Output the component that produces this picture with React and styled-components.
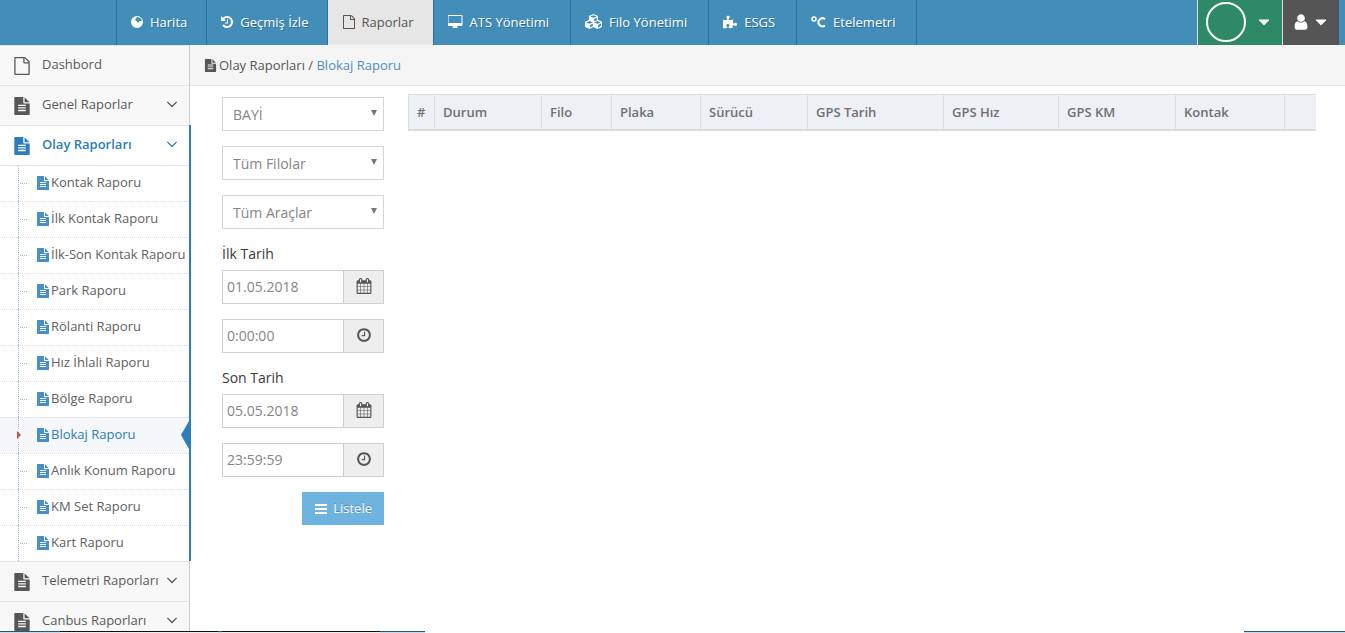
import React, { useState } from 'react';
import styled, { createGlobalStyle, css } from 'styled-components';
import { FaCubes, FaPuzzlePiece } from 'react-icons/fa';

const GlobalStyle = createGlobalStyle`
  *, *::before, *::after {
    box-sizing: border-box;
  }
  body {
    margin: 0;
    background: #fff;
    color: #393939;
    font-family: 'Open Sans', 'Noto Sans', sans-serif;
    font-size: 13px;
    line-height: 20px;
  }
  a {
    color: inherit;
    text-decoration: none;
  }
  ul {
    list-style: none;
    margin: 0;
    padding: 0;
  }
`;

const paths = {
  file: 'M1596 380q28 28 48 76t20 88v1152q0 40-28 68t-68 28h-1344q-40 0-68-28t-28-68v-1600q0-40 28-68t68-28h896q40 0 88 20t76 48zm-444-244v376h376q-10-29-22-41l-313-313q-12-12-41-22zm384 1528v-1024h-416q-40 0-68-28t-28-68v-416h-768v1536h1280z',
  fileText: 'M1596 476q14 14 28 36h-472v-472q22 14 36 28zm-476 164h544v1056q0 40-28 68t-68 28h-1344q-40 0-68-28t-28-68v-1600q0-40 28-68t68-28h800v544q0 40 28 68t68 28zm160 736v-64q0-14-9-23t-23-9h-704q-14 0-23 9t-9 23v64q0 14 9 23t23 9h704q14 0 23-9t9-23zm0-256v-64q0-14-9-23t-23-9h-704q-14 0-23 9t-9 23v64q0 14 9 23t23 9h704q14 0 23-9t9-23zm0-256v-64q0-14-9-23t-23-9h-704q-14 0-23 9t-9 23v64q0 14 9 23t23 9h704q14 0 23-9t9-23z',
  clock: 'M1024 544v448q0 14-9 23t-23 9h-320q-14 0-23-9t-9-23v-64q0-14 9-23t23-9h224v-352q0-14 9-23t23-9h64q14 0 23 9t9 23zm416 352q0-148-73-273t-198-198-273-73-273 73-198 198-73 273 73 273 198 198 273 73 273-73 198-198 73-273zm224 0q0 209-103 385.5t-279.5 279.5-385.5 103-385.5-103-279.5-279.5-103-385.5 103-385.5 279.5-279.5 385.5-103 385.5 103 279.5 279.5 103 385.5z',
  calendar: 'M192 1664h288v-288h-288v288zm352 0h320v-288h-320v288zm-352-352h288v-320h-288v320zm352 0h320v-320h-320v320zm-352-384h288v-288h-288v288zm736 736h320v-288h-320v288zm-384-736h320v-288h-320v288zm768 736h288v-288h-288v288zm-384-352h320v-320h-320v320zm-352-864v-288q0-13-9.5-22.5t-22.5-9.5h-64q-13 0-22.5 9.5t-9.5 22.5v288q0 13 9.5 22.5t22.5 9.5h64q13 0 22.5-9.5t9.5-22.5zm736 864h288v-320h-288v320zm-384-384h320v-288h-320v288zm384 0h288v-288h-288v288zm32-480v-288q0-13-9.5-22.5t-22.5-9.5h-64q-13 0-22.5 9.5t-9.5 22.5v288q0 13 9.5 22.5t22.5 9.5h64q13 0 22.5-9.5t9.5-22.5zm384-64v1280q0 52-38 90t-90 38h-1408q-52 0-90-38t-38-90v-1280q0-52 38-90t90-38h128v-96q0-66 47-113t113-47h64q66 0 113 47t47 113v96h384v-96q0-66 47-113t113-47h64q66 0 113 47t47 113v96h128q52 0 90 38t38 90z',
  angleDown: 'M1395 736q0 13-10 23l-466 466q-10 10-23 10t-23-10l-466-466q-10-10-10-23t10-23l50-50q10-10 23-10t23 10l393 393 393-393q10-10 23-10t23 10l50 50q10 10 10 23z',
  caretDown: 'M1408 704q0 26-19 45l-448 448q-19 19-45 19t-45-19l-448-448q-19-19-19-45t19-45 45-19h896q26 0 45 19t19 45z',
  user: 'M1536 1399q0 109-62.5 187t-150.5 78h-854q-88 0-150.5-78t-62.5-187q0-85 8.5-160.5t31.5-152 58.5-131 94-89 134.5-34.5q131 128 313 128t313-128q76 0 134.5 34.5t94 89 58.5 131 31.5 152 8.5 160.5zm-256-887q0 159-112.5 271.5t-271.5 112.5-271.5-112.5-112.5-271.5 112.5-271.5 271.5-112.5 271.5 112.5 112.5 271.5z',
  history: 'M1664 896q0 156-61 298t-164 245-245 164-298 61q-172 0-327-72.5t-264-204.5q-7-10-6.5-22.5t8.5-20.5l137-138q10-9 25-9 16 2 23 12 73 95 179 147t225 52q104 0 198.5-40.5t163.5-109.5 109.5-163.5 40.5-198.5-40.5-198.5-109.5-163.5-163.5-109.5-198.5-40.5q-98 0-188 35.5t-160 101.5l137 138q31 30 14 69-17 40-59 40h-448q-26 0-45-19t-19-45v-448q0-42 40-59 39-17 69 14l130 129q107-101 244.5-156.5t284.5-55.5q156 0 298 61t245 164 164 245 61 298zm-640-288v448q0 14-9 23t-23 9h-320q-14 0-23-9t-9-23v-64q0-14 9-23t23-9h224v-352q0-14 9-23t23-9h64q14 0 23 9t9 23z',
  desktop: 'M1728 992v-832q0-13-9.5-22.5t-22.5-9.5h-1600q-13 0-22.5 9.5t-9.5 22.5v832q0 13 9.5 22.5t22.5 9.5h1600q13 0 22.5-9.5t9.5-22.5zm128-832v1088q0 66-47 113t-113 47h-544q0 37 16 77.5t32 71 16 43.5q0 26-19 45t-45 19h-512q-26 0-45-19t-19-45q0-14 16-44t32-70 16-78h-544q-66 0-113-47t-47-113v-1088q0-66 47-113t113-47h1600q66 0 113 47t47 113z',
  bars: 'M128 256h1536v256h-1536zM128 768h1536v256h-1536zM128 1280h1536v256h-1536z',
  globe: 'M896 128a768 768 0 1 0 0 1536a768 768 0 1 0 0-1536zM800 330l200-60 130 60 200 40 130 200 60 200-120 40-110-70-120 60-60 140-90 60-110-110-100-130-120-60-30-150 130-100z',
};

// glyphs that do not fill the square em box
const boxes = {
  globe: [128, 1536],
  history: [128, 1536],
  desktop: [0, 1920],
};

const Svg = styled.svg`
  display: block;
  flex: none;
  fill: currentColor;
`;

const Icon = ({ name, size = 14 }) => {
  const [x, w] = boxes[name] || [0, 1792];
  return (
    <Svg
      width={Math.round((size * w) / 1792)}
      height={size}
      viewBox={`${x} 0 ${w} 1792`}
      fillRule="evenodd"
      aria-hidden="true"
    >
      <path d={paths[name]} />
    </Svg>
  );
};

const Celsius = () => (
  <Svg width="15" height="14" viewBox="0 0 15 14" aria-hidden="true">
    <circle cx="3" cy="4" r="2" fill="none" stroke="currentColor" strokeWidth="1.5" />
    <path d="M14 4.2A4 4 0 1 0 14 10.4" fill="none" stroke="currentColor" strokeWidth="2" />
  </Svg>
);

const Page = styled.div`
  display: flex;
  flex-direction: column;
  height: 100vh;
  overflow: hidden;
`;

const Navbar = styled.header`
  display: flex;
  flex: none;
  justify-content: space-between;
  height: 45px;
  padding: 0 6px 0 116px;
  background: #438eb9;
`;

const NavList = styled.ul`
  display: flex;
  border-right: 1px solid #2c7199;
`;

const NavLink = styled.a`
  display: flex;
  align-items: center;
  gap: 7px;
  height: 45px;
  padding: 0 ${({ $wide }) => ($wide ? '21px' : '19px')} 2px 14px;
  border-left: 1px solid #2c7199;
  color: #fff;
  text-shadow: 1px 1px 0 rgba(0, 0, 0, 0.25);
  ${({ $active }) =>
    $active &&
    css`
      gap: 5px;
      background: #e6e6e6;
      color: #555;
      text-shadow: none;
    `}
`;

const UserNav = styled.div`
  display: flex;
`;

const UserButton = styled.button`
  display: flex;
  align-items: center;
  gap: ${({ $green }) => ($green ? '9px' : '2px')};
  height: 45px;
  padding: ${({ $green }) => ($green ? '0 9px 2px 8px' : '0 9px 2px')};
  border: 0;
  border-left: 1px solid #ddd;
  background: ${({ $green }) => ($green ? '#2e8965' : '#555')};
  color: #fff;
`;

const Avatar = styled.span`
  width: 40px;
  height: 40px;
  border: 2px solid #fff;
  border-radius: 50%;
`;

const Body = styled.div`
  display: flex;
  flex: 1;
  min-height: 0;
`;

const Sidebar = styled.nav`
  flex: none;
  width: 190px;
  border-right: 1px solid #ccc;
  background: #f2f2f2;
`;

const MenuItem = styled.li`
  position: relative;
  border-top: 1px solid #e5e5e5;
  ${({ $open }) =>
    $open &&
    css`
      background: #fff;
      &::after {
        content: '';
        position: absolute;
        top: -1px;
        bottom: 0;
        right: -2px;
        width: 2px;
        background: #2b7dbc;
      }
    `}
`;

const MenuLink = styled.a`
  display: flex;
  align-items: center;
  height: 39px;
  padding: 0 8px 0 13px;
  background: ${({ $open }) => ($open ? '#fff' : '#f8f8f8')};
  color: ${({ $open }) => ($open ? '#2b7dbc' : '#585858')};
  font-weight: ${({ $open }) => ($open ? 600 : 400)};
`;

const MenuLabel = styled.span`
  display: flex;
  flex: 1;
  align-items: center;
  justify-content: space-between;
  padding: 0 0 4px 11px;
  white-space: nowrap;
`;

const SubMenu = styled.ul`
  border-top: 1px solid #e5e5e5;
`;

const SubLink = styled.a`
  display: flex;
  align-items: center;
  gap: 1px;
  height: 35px;
  padding: 0 0 2px 36px;
  background: ${({ $active }) => ($active ? '#f5f7fa' : '#fff')};
  color: ${({ $active }) => ($active ? '#2b7dbc' : '#616161')};
  white-space: nowrap;
  svg {
    color: #478fca;
  }
  span {
    padding-bottom: 2px;
  }
`;

const SubItem = styled.li`
  position: relative;
  &:not(:first-child) ${SubLink} {
    border-top: 1px dotted #ddd;
    height: 36px;
  }
  &::before {
    content: '';
    position: absolute;
    top: 0;
    bottom: 0;
    left: 18px;
    border-left: 1px dotted #9dbdd6;
  }
  &::after {
    content: '';
    position: absolute;
    bottom: 17px;
    left: 20px;
    width: 7px;
    border-top: 1px dotted #9dbdd6;
    ${({ $active }) => $active && 'display: none;'}
  }
`;

const ActiveMarks = styled.span`
  &::before {
    content: '';
    position: absolute;
    z-index: 1;
    top: 14px;
    left: 17px;
    border: solid transparent;
    border-width: 4px 0 4px 4px;
    border-left-color: #c9513f;
    outline: 2px solid #f5f7fa;
  }
  &::after {
    content: '';
    position: absolute;
    top: 4px;
    right: 0;
    border: solid transparent;
    border-width: 14px 8px 14px 0;
    border-right-color: #2b7dbc;
  }
`;

const Main = styled.main`
  flex: 1;
  min-width: 0;
`;

const Breadcrumb = styled.div`
  display: flex;
  align-items: center;
  gap: 2px;
  height: 41px;
  padding: 0 14px;
  border-bottom: 1px solid #e5e5e5;
  background: #f5f5f5;
  color: #555;
  a {
    color: #4c8fbd;
  }
`;

const Content = styled.div`
  display: flex;
  align-items: flex-start;
  gap: 24px;
  padding: 8px 29px 0 32px;
`;

const Filters = styled.form`
  display: flex;
  flex: none;
  flex-direction: column;
  gap: 15px;
  width: 162px;
  padding-top: 3px;
`;

const SelectBox = styled.div`
  position: relative;
  svg {
    position: absolute;
    top: 13px;
    right: 7px;
    color: #777;
    pointer-events: none;
  }
`;

const Select = styled.select`
  display: block;
  width: 100%;
  height: 34px;
  padding: 2px 20px 0 10px;
  border: 1px solid #d5d5d5;
  border-radius: 0;
  appearance: none;
  background: #fff;
  color: #858585;
  font: inherit;
  font-size: 14px;
`;

const Field = styled.div`
  display: flex;
  flex-direction: column;
  gap: 6px;
  font-size: 14px;
`;

const InputGroup = styled.div`
  display: flex;
  height: 34px;
  border: 1px solid #d0d0d0;
`;

const Input = styled.input`
  flex: 1;
  min-width: 0;
  padding: 0 4px;
  border: 0;
  color: #858585;
  font: inherit;
  font-size: 14px;
`;

const Addon = styled.button`
  display: flex;
  justify-content: center;
  width: 40px;
  padding: 7px 0 0;
  border: 0;
  border-left: 1px solid #ccc;
  background: #eee;
  color: #555;
`;

const ListButton = styled.button`
  display: flex;
  align-items: center;
  align-self: flex-end;
  gap: 5px;
  height: 33px;
  padding: 0 12px 2px;
  border: 0;
  background: #6fb3e0;
  color: #fff;
  font: inherit;
  text-shadow: 0 -1px 0 rgba(0, 0, 0, 0.25);
  svg {
    margin-top: 2px;
  }
`;

const Table = styled.table`
  flex: 1;
  min-width: 0;
  width: 100%;
  table-layout: fixed;
  border-collapse: separate;
  border-spacing: 0;
`;

const Th = styled.th`
  width: ${({ $w }) => $w}px;
  height: 37px;
  padding: 0 8px;
  border: solid #ddd;
  border-width: 1px 0 2px 1px;
  background: #edf0f5;
  color: #707070;
  font-weight: 600;
  text-align: left;
  white-space: nowrap;
`;

const Taskbar = styled.div`
  position: fixed;
  bottom: 0;
  ${({ $side }) => $side}: 0;
  display: flex;
  gap: 4px;
  width: ${({ $w }) => $w}px;
  height: 2px;
  padding-left: 60px;
  background: linear-gradient(#2f5573 1px, #c5dcec 1px);
`;

const TaskWindow = styled.span`
  width: 158px;
  background: linear-gradient(#111 1px, #eee 1px);
`;

const navItems = [
  { txt: 'Harita', icon: <Icon name="globe" /> },
  { txt: 'Geçmiş İzle', icon: <Icon name="history" /> },
  { txt: 'Raporlar', icon: <Icon name="file" />, active: true },
  { txt: 'ATS Yönetimi', icon: <Icon name="desktop" />, wide: true },
  { txt: 'Filo Yönetimi', icon: <FaCubes size={17} />, wide: true },
  { txt: 'ESGS', icon: <FaPuzzlePiece size={14} />, wide: true },
  { txt: 'Etelemetri', icon: <Celsius />, wide: true },
];

const reports = [
  'Kontak Raporu',
  'İlk Kontak Raporu',
  'İlk-Son Kontak Raporu',
  'Park Raporu',
  'Rölanti Raporu',
  'Hız İhlali Raporu',
  'Bölge Raporu',
  'Blokaj Raporu',
  'Anlık Konum Raporu',
  'KM Set Raporu',
  'Kart Raporu',
];

const menu = [
  { txt: 'Dashbord', icon: 'file' },
  { txt: 'Genel Raporlar', icon: 'fileText', arrow: true },
  { txt: 'Olay Raporları', icon: 'fileText', arrow: true, children: reports },
  { txt: 'Telemetri Raporları', icon: 'fileText', arrow: true },
  { txt: 'Canbus Raporları', icon: 'fileText', arrow: true },
];

const columns = [
  ['#', 26],
  ['Durum', 107],
  ['Filo', 70],
  ['Plaka', 89],
  ['Sürücü', 107],
  ['GPS Tarih', 136],
  ['GPS Hız', 115],
  ['GPS KM', 117],
  ['Kontak', 109],
  ['', 32],
];

const FilterSelect = ({ label, option }) => (
  <SelectBox>
    <Select aria-label={label}>
      <option>{option}</option>
    </Select>
    <Svg width="6" height="6" viewBox="0 0 6 6" aria-hidden="true">
      <path d="M0 0h6L3 6z" />
    </Svg>
  </SelectBox>
);

const PickerInput = ({ id, label, icon, initial }) => {
  const [value, setValue] = useState(initial);
  return (
    <InputGroup>
      <Input id={id} aria-label={label} value={value} onChange={(e) => setValue(e.target.value)} />
      <Addon type="button" aria-label={`${label} seç`}>
        <Icon name={icon} size={16} />
      </Addon>
    </InputGroup>
  );
};

const App = () => {
  const [selected, setSelected] = useState('Blokaj Raporu');

  return (
    <>
      <GlobalStyle />
      <Page>
        <Navbar>
          <NavList>
            {navItems.map((item) => (
              <li key={item.txt}>
                <NavLink href="#" $active={item.active} $wide={item.wide}>
                  {item.icon}
                  {item.txt}
                </NavLink>
              </li>
            ))}
          </NavList>
          <UserNav>
            <UserButton type="button" aria-label="Firma" $green>
              <Avatar />
              <Icon name="caretDown" size={18} />
            </UserButton>
            <UserButton type="button" aria-label="Kullanıcı">
              <Icon name="user" size={18} />
              <Icon name="caretDown" size={18} />
            </UserButton>
          </UserNav>
        </Navbar>

        <Body>
          <Sidebar>
            <ul>
              {menu.map((item) => (
                <MenuItem key={item.txt} $open={!!item.children}>
                  <MenuLink href="#" $open={!!item.children}>
                    <Icon name={item.icon} size={18} />
                    <MenuLabel>
                      {item.txt}
                      {item.arrow && <Icon name="angleDown" size={18} />}
                    </MenuLabel>
                  </MenuLink>
                  {item.children && (
                    <SubMenu>
                      {item.children.map((txt) => (
                        <SubItem key={txt} $active={txt === selected}>
                          <SubLink href="#" $active={txt === selected} onClick={() => setSelected(txt)}>
                            <Icon name="fileText" size={14} />
                            <span>{txt}</span>
                          </SubLink>
                          {txt === selected && <ActiveMarks />}
                        </SubItem>
                      ))}
                    </SubMenu>
                  )}
                </MenuItem>
              ))}
            </ul>
          </Sidebar>

          <Main>
            <Breadcrumb>
              <Icon name="fileText" size={13} />
              <span>
                Olay Raporları / <a href="#">Blokaj Raporu</a>
              </span>
            </Breadcrumb>
            <Content>
              <Filters onSubmit={(e) => e.preventDefault()}>
                <FilterSelect label="Bayi" option="BAYİ" />
                <FilterSelect label="Filo" option="Tüm Filolar" />
                <FilterSelect label="Araç" option="Tüm Araçlar" />
                <Field>
                  <label htmlFor="ilk-tarih">İlk Tarih</label>
                  <PickerInput id="ilk-tarih" label="İlk Tarih" icon="calendar" initial="01.05.2018" />
                </Field>
                <PickerInput id="ilk-saat" label="İlk Saat" icon="clock" initial="0:00:00" />
                <Field>
                  <label htmlFor="son-tarih">Son Tarih</label>
                  <PickerInput id="son-tarih" label="Son Tarih" icon="calendar" initial="05.05.2018" />
                </Field>
                <PickerInput id="son-saat" label="Son Saat" icon="clock" initial="23:59:59" />
                <ListButton type="submit">
                  <Icon name="bars" />
                  Listele
                </ListButton>
              </Filters>
              <Table>
                <thead>
                  <tr>
                    {columns.map(([txt, w], i) => (
                      <Th key={i} $w={w}>
                        {txt}
                      </Th>
                    ))}
                  </tr>
                </thead>
              </Table>
            </Content>
          </Main>
        </Body>
        <Taskbar $side="left" $w={425}>
          <TaskWindow />
          <TaskWindow />
        </Taskbar>
        <Taskbar $side="right" $w={101} />
      </Page>
    </>
  );
};

export default App;
